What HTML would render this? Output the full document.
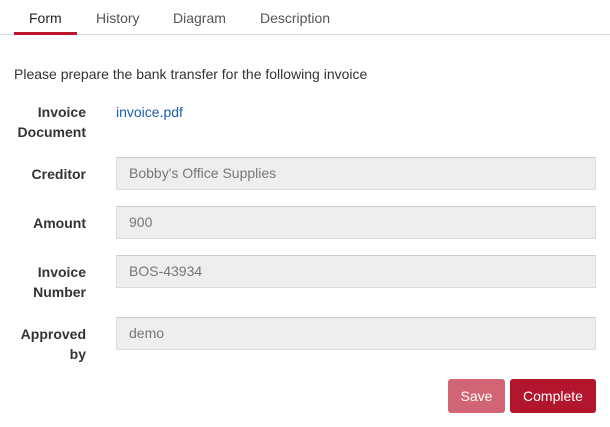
<!DOCTYPE html>
<html><head><style>
body{margin:0;width:610px;height:427px;background:#fff;font-family:"Liberation Sans",sans-serif;position:relative;overflow:hidden}
.a{position:absolute}
.tab{position:absolute;top:10px;font-size:14px;color:#555}
.lbl{position:absolute;right:524px;text-align:right;font-weight:bold;font-size:14px;color:#333;line-height:20px}
.inp{position:absolute;left:116px;height:31px;background:#eee;border:1px solid #ddd;border-top-color:#ccc;color:#777;font-size:14px;line-height:31px;padding-left:12px;box-sizing:content-box;width:466px}
.btn{position:absolute;top:379px;height:34px;border-radius:3px;color:#fff;font-size:14px;line-height:34px;text-align:center}
</style></head><body>
<div class="tab" style="left:29px;color:#222">Form</div>
<div class="tab" style="left:96px">History</div>
<div class="tab" style="left:173px">Diagram</div>
<div class="tab" style="left:260px">Description</div>
<div class="a" style="left:0;top:34px;width:610px;height:1px;background:#ddd"></div>
<div class="a" style="left:14px;top:32px;width:63px;height:3px;background:#c0152e"></div>
<div class="a" style="left:14px;top:66px;font-size:14px;color:#333">Please prepare the bank transfer for the following invoice</div>
<div class="lbl" style="top:102px">Invoice<br>Document</div>
<div class="a" style="left:116px;top:104px;font-size:14px;color:#1a5ea8">invoice.pdf</div>
<div class="lbl" style="top:164px">Creditor</div>
<div class="inp" style="top:157px">Bobby's Office Supplies</div>
<div class="lbl" style="top:213px">Amount</div>
<div class="inp" style="top:206px">900</div>
<div class="lbl" style="top:262px">Invoice<br>Number</div>
<div class="inp" style="top:255px">BOS-43934</div>
<div class="lbl" style="top:324px">Approved<br>by</div>
<div class="inp" style="top:317px">demo</div>
<div class="btn" style="left:448px;width:57px;background:#d26574">Save</div>
<div class="btn" style="left:510px;width:86px;background:#b3152c">Complete</div>
</body></html>
